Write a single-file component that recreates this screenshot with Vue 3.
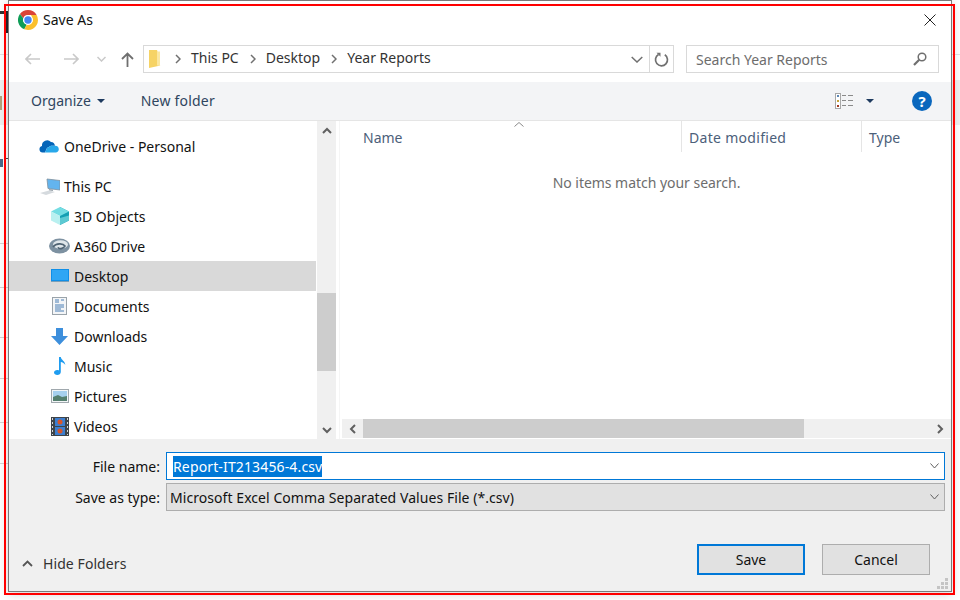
<script setup>
const places = [
  { name: 'This PC', icon: 'pc', level: 1, top: true },
  { name: '3D Objects', icon: 'cube', level: 2 },
  { name: 'A360 Drive', icon: 'a360', level: 2 },
  { name: 'Desktop', icon: 'desktop', level: 2, selected: true },
  { name: 'Documents', icon: 'docs', level: 2 },
  { name: 'Downloads', icon: 'down', level: 2 },
  { name: 'Music', icon: 'music', level: 2 },
  { name: 'Pictures', icon: 'pics', level: 2 },
  { name: 'Videos', icon: 'video', level: 2 },
]
const behindLines = [243, 287, 337, 378, 422, 463]
</script>

<template>
  <div class="page">
    <div class="behind">
      <div class="band"></div>
      <div class="line wide"></div>
      <div v-for="y in behindLines" :key="y" class="line" :style="{ top: y + 'px' }"></div>
      <div class="frag frag-n"></div>
      <div class="frag frag-n2"></div>
      <div class="frag frag-ly"></div>
      <div class="frag frag-or"></div>
      <div class="frag frag-tick"></div>
    </div>
    <div class="dialog">
      <header class="title">
        <svg class="chrome" width="20" height="20" viewBox="0 0 20 20">
          <path d="M10 0a10 10 0 0 1 8.66 5H10a5 5 0 0 0-4.700 3.300L1.900 4.100A10 10 0 0 1 10 0z" fill="#db4437" />
          <path d="M1.900 4.100l3.400 4.200A5 5 0 0 0 8.700 14.800L6.300 19.300A10 10 0 0 1 1.900 4.100z" fill="#0f9d58" />
          <path d="M18.660 5A10 10 0 0 1 10 20L6.300 19.300l2.400-4.500A5 5 0 0 0 14.300 7.500L13 5z" fill="#fbc02d" />
          <circle cx="10" cy="10" r="4.700" fill="#fff" />
          <circle cx="10" cy="10" r="3.700" fill="#4285f4" />
        </svg>
        <span class="title-text">Save As</span>
        <svg class="close" width="12" height="12" viewBox="0 0 12 12">
          <path d="M.5.5l11 11M11.500.5l-11 11" stroke="#222" fill="none" />
        </svg>
      </header>

      <nav class="nav">
        <div class="arrows">
          <svg width="15" height="12" viewBox="0 0 15 12"><path d="M15 6H1M6 1L1 6l5 5" stroke="#c9c9c9" stroke-width="1.6" fill="none" /></svg>
          <svg width="15" height="12" viewBox="0 0 15 12"><path d="M0 6h14M9 1l5 5-5 5" stroke="#c9c9c9" stroke-width="1.6" fill="none" /></svg>
          <svg width="9" height="6" viewBox="0 0 9 6"><path d="M.5 1l4 4 4-4" stroke="#c9c9c9" stroke-width="1.5" fill="none" /></svg>
          <svg width="13" height="15" viewBox="0 0 13 15"><path d="M6.500 15V1.500M1 7l5.500-5.500L12 7" stroke="#6f6f6f" stroke-width="1.8" fill="none" /></svg>
        </div>
        <div class="address">
          <svg class="folder" width="12" height="18" viewBox="0 0 12 18">
            <path d="M0 0h8l.5 1.500V15l3 .5L0 18z" fill="#f6d365" />
            <path d="M8 1.500h3V15.500H8z" fill="#fbe7a1" />
          </svg>
          <svg class="crumb" width="6" height="10" viewBox="0 0 6 10"><path d="M1 1l4 4-4 4" stroke="#707070" stroke-width="1.5" fill="none" /></svg>
          <span class="crumb-text">This PC</span>
          <svg class="crumb" width="6" height="10" viewBox="0 0 6 10"><path d="M1 1l4 4-4 4" stroke="#707070" stroke-width="1.5" fill="none" /></svg>
          <span class="crumb-text">Desktop</span>
          <svg class="crumb" width="6" height="10" viewBox="0 0 6 10"><path d="M1 1l4 4-4 4" stroke="#707070" stroke-width="1.5" fill="none" /></svg>
          <span class="crumb-text">Year Reports</span>
          <svg class="addr-caret" width="12" height="7" viewBox="0 0 12 7"><path d="M.7 1l5.300 5 5.300-5" stroke="#707070" stroke-width="1.500" fill="none" /></svg>
          <div class="refresh">
            <svg width="15" height="15" viewBox="0 0 15 15">
              <path d="M4.500 2.600A6 6 0 1 0 10.800 2.800" stroke="#707070" stroke-width="1.700" fill="none" />
              <path d="M2.500 .8h4v4z" fill="#707070" />
            </svg>
          </div>
        </div>
        <div class="search">
          <span>Search Year Reports</span>
          <svg width="14" height="14" viewBox="0 0 14 14">
            <circle cx="9" cy="5" r="3.800" stroke="#6f6f6f" stroke-width="1.500" fill="none" />
            <path d="M6.200 7.800L1 13" stroke="#6f6f6f" stroke-width="2.200" />
          </svg>
        </div>
      </nav>

      <div class="toolbar">
        <span class="tool">Organize</span>
        <svg class="tri" width="8" height="4" viewBox="0 0 8 4"><path d="M0 0h8L4 4z" fill="#1e3a5f" /></svg>
        <span class="tool new">New folder</span>
        <svg class="views" width="18" height="16" viewBox="0 0 18 16">
          <rect x=".5" y=".5" width="5" height="15" fill="#fff" stroke="#a8a8a8" />
          <rect x="2" y="2" width="2" height="2" fill="#5b87b5" />
          <rect x="2" y="7" width="2" height="2" fill="#c6a23a" />
          <rect x="2" y="12" width="2" height="2" fill="#a33b22" />
          <path d="M7 2.500h4M13 2.500h5M7 7.500h4M13 7.500h5M7 12.500h4M13 12.500h5" stroke="#8a8a8a" />
        </svg>
        <svg class="tri view-tri" width="8" height="4" viewBox="0 0 8 4"><path d="M0 0h8L4 4z" fill="#1e3a5f" /></svg>
        <span class="help">?</span>
      </div>

      <main class="main">
        <aside class="tree">
          <div class="row lvl1 onedrive">
            <span class="slot">
              <svg width="20" height="14" viewBox="0 0 20 14">
                <path d="M3.500 13.500a3.300 3.300 0 0 1-.5-6.500A5.200 5.200 0 0 1 12 3a4.500 4.500 0 0 1 4 3.700h-4L8 9l-2 4.500z" fill="#0364b8" />
                <path d="M6 13.500L8 9l4-2.300h4a3.500 3.500 0 0 1 3.800 3.500c0 1.800-1.300 3.300-3.200 3.300z" fill="#28a8ea" />
              </svg>
            </span>
            <span class="label">OneDrive - Personal</span>
          </div>
          <div v-for="p in places" :key="p.name" class="row" :class="[p.level === 1 ? 'lvl1' : 'lvl2', { selected: p.selected, gap: p.top }]">
            <span class="slot">
              <svg v-if="p.icon === 'pc'" width="21" height="18" viewBox="0 0 21 18">
                <path d="M8 2l13 1.500V13L9 11.500z" fill="#63b4ee" stroke="#7f8f9c" stroke-width=".8" />
                <path d="M10 12l4 .5v1.500l-4-.5z" fill="#9aa4ac" />
                <path d="M1 16l9-2.500 6 1.500-9 3z" fill="#d5dade" />
              </svg>
              <svg v-else-if="p.icon === 'cube'" width="18" height="18" viewBox="0 0 18 18">
                <path d="M9 0l9 4.500v9L9 18z" fill="#149fb3" />
                <path d="M9 11l9-2.500v5L9 18z" fill="#5cc9d2" />
                <path d="M9 0L0 4.500 9 9l9-4.500z" fill="#74dde3" />
                <path d="M0 4.500v9L9 18V9z" fill="#b9f0f0" />
              </svg>
              <svg v-else-if="p.icon === 'a360'" width="21" height="16" viewBox="0 0 21 16">
                <ellipse cx="10.500" cy="8" rx="10.500" ry="7.500" fill="#7d91a1" />
                <ellipse cx="11.500" cy="6.500" rx="7.500" ry="4.200" fill="#dfe6ea" />
                <path d="M4 9c3-4 10-4 12-1-2 3-6 3.500-7 1.200" stroke="#4f6373" stroke-width="1.600" fill="none" />
              </svg>
              <svg v-else-if="p.icon === 'desktop'" width="18" height="14" viewBox="0 0 18 14">
                <rect width="18" height="12" fill="#0f8fe8" />
                <rect x="1" y="1" width="16" height="10" fill="#2fa6f4" />
                <rect y="12" width="18" height="1" fill="#7a9fb8" />
              </svg>
              <svg v-else-if="p.icon === 'docs'" width="15" height="18" viewBox="0 0 15 18">
                <rect x=".5" y=".5" width="14" height="17" fill="#f3f5f7" stroke="#9aa3aa" />
                <path d="M3 3h4M3 5h4M9 3h3M3 8h9M3 10h9M3 12h6M3 14h9" stroke="#4a7fb5" />
              </svg>
              <svg v-else-if="p.icon === 'down'" width="17" height="17" viewBox="0 0 17 17">
                <path d="M5 0h7v8h5l-8.500 9L0 8h5z" fill="#3d8fdc" />
              </svg>
              <svg v-else-if="p.icon === 'music'" width="12" height="18" viewBox="0 0 12 18">
                <path d="M5 0h1.800c.3 3 4.500 4 4.500 8-1-1.800-2.800-2.700-4.500-3v10c0 1.800-1.700 3-3.500 3S0 17 0 15.500 1.500 13 3.200 13c.7 0 1.300.1 1.800.4z" fill="#1e9cf0" />
              </svg>
              <svg v-else-if="p.icon === 'pics'" width="18" height="14" viewBox="0 0 18 14">
                <rect x=".5" y=".5" width="17" height="13" fill="#f2f5f7" stroke="#a0a8ad" />
                <rect x="2" y="2" width="14" height="6" fill="#a6d0ee" />
                <path d="M2 8l5-2 4 2 5-1v5H2z" fill="#55806f" />
              </svg>
              <svg v-else-if="p.icon === 'video'" width="18" height="19" viewBox="0 0 18 19">
                <rect width="18" height="19" fill="#3e4449" />
                <rect x="4" y="1" width="10" height="8" fill="#3c7fd0" />
                <rect x="4" y="10" width="10" height="8" fill="#3c7fd0" />
                <circle cx="9" cy="5" r="2.500" fill="#d8562b" />
                <circle cx="9" cy="14" r="2.500" fill="#d8562b" />
                <path d="M1.500 1v17M16.500 1v17" stroke="#d5d8da" stroke-dasharray="2 2" />
              </svg>
            </span>
            <span class="label">{{ p.name }}</span>
          </div>
        </aside>

        <div class="vscroll">
          <div class="sbtn">
            <svg width="10" height="7" viewBox="0 0 10 7"><path d="M1 6l4-4 4 4" stroke="#606060" stroke-width="2" fill="none" /></svg>
          </div>
          <div class="vthumb"></div>
          <div class="sbtn end">
            <svg width="10" height="7" viewBox="0 0 10 7"><path d="M1 1l4 4 4-4" stroke="#606060" stroke-width="2" fill="none" /></svg>
          </div>
        </div>

        <section class="list">
          <div class="heads">
            <span class="col col-name">Name
              <svg class="sort" width="10" height="5" viewBox="0 0 10 5"><path d="M.5 4.500L5 .5l4.500 4" stroke="#8a8a8a" fill="none" /></svg>
            </span>
            <span class="col col-date">Date modified</span>
            <span class="col col-type">Type</span>
          </div>
          <p class="empty">No items match your search.</p>
          <div class="hscroll">
            <div class="hbtn">
              <svg width="7" height="10" viewBox="0 0 7 10"><path d="M6 1L2 5l4 4" stroke="#606060" stroke-width="2" fill="none" /></svg>
            </div>
            <div class="hthumb"></div>
            <div class="hbtn right">
              <svg width="7" height="10" viewBox="0 0 7 10"><path d="M1 1l4 4-4 4" stroke="#606060" stroke-width="2" fill="none" /></svg>
            </div>
          </div>
        </section>
      </main>

      <footer class="bottom">
        <div class="fields">
          <label>File name:</label>
          <div class="input">
            <span class="sel">Report-IT213456-4.csv</span>
            <svg width="9" height="6" viewBox="0 0 9 6"><path d="M.5.500l4 4.500 4-4.500" stroke="#606060" fill="none" /></svg>
          </div>
          <label>Save as type:</label>
          <div class="select">
            <span class="type-text">Microsoft Excel Comma Separated Values File (*.csv)</span>
            <svg width="9" height="6" viewBox="0 0 9 6"><path d="M.5.500l4 4.500 4-4.500" stroke="#606060" fill="none" /></svg>
          </div>
        </div>
        <div class="actions">
          <div class="hide">
            <svg width="11" height="7" viewBox="0 0 11 7"><path d="M1 6l4.500-4.500L10 6" stroke="#555" stroke-width="1.800" fill="none" /></svg>
            <span>Hide Folders</span>
          </div>
          <button class="btn primary">Save</button>
          <button class="btn">Cancel</button>
        </div>
        <svg class="grip" width="11" height="11" viewBox="0 0 11 11">
          <path d="M8 0h3v3H8zM4 4h3v3H4zM8 4h3v3H8zM0 8h3v3H0zM4 8h3v3H4zM8 8h3v3H8z" fill="#c4c4c4" />
        </svg>
      </footer>
    </div>
    <div class="red-frame"></div>
  </div>
</template>

<style>
html, body { margin: 0; background: #fff; }
</style>

<style scoped>
.page {
  position: relative;
  width: 960px;
  height: 600px;
  overflow: hidden;
  background: #fff;
  font-family: "Noto Sans", "Open Sans", sans-serif;
  font-size: 14px;
  color: #1a1a1a;
}
.behind {
  position: absolute;
  inset: 0;
  overflow: hidden;
}
.band {
  position: absolute;
  left: 0;
  right: 0;
  top: 80px;
  height: 45px;
  background: #f0f0f0;
}
.line {
  position: absolute;
  left: 0;
  width: 8px;
  height: 1px;
  background: #d4d4d4;
}
.wide {
  top: 54px;
  width: 100%;
  background: #e2e2e2;
}
.frag { position: absolute; }
.frag-n {
  left: 0;
  top: 11px;
  width: 4px;
  height: 3px;
  background: #333;
}
.frag-n2 {
  left: 5px;
  top: 11px;
  width: 3px;
  height: 22px;
  background: #22262b;
}
.frag-ly {
  left: 0;
  top: 96px;
  width: 2px;
  height: 14px;
  background: #b4a27a;
}
.frag-or {
  left: 0;
  top: 159px;
  width: 3px;
  height: 8px;
  background: #4a6a8a;
}
.frag-tick {
  left: 6px;
  top: 158px;
  width: 2px;
  height: 1px;
  background: #444;
}
.red-frame {
  position: absolute;
  left: 4px;
  top: 4px;
  width: 947px;
  height: 587px;
  border: 2px solid #f00;
  pointer-events: none;
}
.dialog {
  position: relative;
  box-sizing: border-box;
  width: 944px;
  height: 592px;
  margin-left: 8px;
  border: 1px solid #7a7a7a;
  display: flex;
  flex-direction: column;
  background: #fff;
  box-shadow: 0 2px 10px rgba(0, 0, 0, .18);
}
.title {
  height: 44px;
  flex: none;
  display: flex;
  align-items: center;
  padding: 0 15px 6px 9px;
  box-sizing: border-box;
}
.title-text { margin: 0 0 2px 5px; color: #111; }
.close { margin-left: auto; }
.nav {
  height: 28px;
  flex: none;
  display: flex;
  align-items: center;
  margin-bottom: 9px;
}
.arrows {
  width: 134px;
  flex: none;
  box-sizing: border-box;
  padding-left: 16px;
  display: flex;
  align-items: center;
}
.arrows svg:nth-child(2) { margin-left: 24px; }
.arrows svg:nth-child(3) { margin-left: 18px; }
.arrows svg:nth-child(4) { margin-left: 15px; }
.address {
  width: 531px;
  height: 28px;
  box-sizing: border-box;
  border: 1px solid #d9d9d9;
  display: flex;
  align-items: center;
  padding-left: 5px;
}
.folder { flex: none; margin-right: 14px; }
.crumb { flex: none; }
.crumb-text { margin: 0 11px 3px 10px; color: #333; }
.addr-caret { margin-left: auto; margin-right: 6px; }
.refresh {
  width: 23px;
  height: 26px;
  border-left: 1px solid #d9d9d9;
  display: flex;
  align-items: center;
  justify-content: center;
}
.search {
  width: 253px;
  height: 28px;
  margin-left: 12px;
  box-sizing: border-box;
  border: 1px solid #d9d9d9;
  display: flex;
  align-items: center;
  justify-content: space-between;
  padding: 0 11px 0 9px;
  color: #6d6d6d;
}
.toolbar {
  height: 39px;
  flex: none;
  box-sizing: border-box;
  background: #f3f4f6;
  border-bottom: 1px solid #e5e5e5;
  display: flex;
  align-items: center;
  padding-left: 22px;
  color: #2f4560;
}
.tool { margin-bottom: 1px; }
.tri { margin-left: 6px; flex: none; }
.new { margin-left: 36px; letter-spacing: .2px; }
.views { margin-left: auto; transform: translateX(1px); }
.view-tri { margin-left: 14px; }
.help {
  width: 20px;
  height: 20px;
  margin: 0 19px 0 38px;
  border-radius: 50%;
  background: #0a67bd;
  color: #fff;
  font-weight: 700;
  font-size: 15px;
  line-height: 20px;
  text-align: center;
}
.main {
  height: 318px;
  flex: none;
  display: flex;
}
.tree {
  width: 307px;
  flex: none;
  box-sizing: border-box;
  padding-top: 10px;
  margin-right: 1px;
  overflow: hidden;
}
.row {
  height: 30px;
  display: flex;
  align-items: center;
  color: #111;
}
.slot {
  width: 21px;
  flex: none;
  display: flex;
  align-items: center;
  justify-content: center;
}
.onedrive .slot { justify-content: flex-start; }
.label { margin-left: 4px; }
.gap { margin-top: 10px; }
.lvl1 { padding-left: 30px; }
.lvl2 { padding-left: 40px; }
.selected { background: #d9d9d9; }
.vscroll {
  width: 19px;
  flex: none;
  background: #f0f0f0;
  display: flex;
  flex-direction: column;
  align-items: center;
}
.sbtn {
  height: 18px;
  width: 100%;
  display: flex;
  align-items: center;
  justify-content: center;
}
.vthumb {
  width: 100%;
  height: 78px;
  margin-top: 154px;
  background: #cdcdcd;
}
.end { margin-top: auto; }
.list {
  flex: 1;
  display: flex;
  flex-direction: column;
  margin-left: 3px;
  border-left: 1px solid #f5f5f5;
  min-width: 0;
}
.heads {
  height: 31px;
  flex: none;
  display: flex;
  color: #4c607a;
}
.col {
  position: relative;
  box-sizing: border-box;
  display: flex;
  align-items: center;
  padding-top: 2px;
}
.col-name { width: 342px; padding-left: 23px; border-right: 1px solid #e5e5e5; }
.col-date { width: 180px; padding-left: 7px; border-right: 1px solid #e5e5e5; letter-spacing: .3px; }
.col-type { padding-left: 7px; }
.sort { position: absolute; left: 174px; top: 1px; }
.empty {
  margin: 21px 0 0;
  flex: 1;
  padding-left: 2px;
  text-align: center;
  color: #6d6d6d;
  letter-spacing: -.03px;
}
.hscroll {
  height: 19px;
  flex: none;
  margin: 0 0 1px 2px;
  background: #f0f0f0;
  display: flex;
  align-items: center;
}
.hbtn {
  width: 21px;
  flex: none;
  display: flex;
  justify-content: center;
}
.hthumb {
  width: 441px;
  height: 100%;
  background: #cdcdcd;
}
.right { margin-left: auto; }
.bottom {
  position: relative;
  flex: 1;
  background: #f0f0f0;
  box-sizing: border-box;
  padding-top: 13px;
}
.fields {
  display: grid;
  grid-template-columns: 151px 779px;
  grid-auto-rows: 28px;
  column-gap: 6px;
  row-gap: 3px;
  align-items: center;
}
.fields label { text-align: right; color: #111; }
.input, .select {
  box-sizing: border-box;
  height: 28px;
  display: flex;
  align-items: center;
  justify-content: space-between;
  padding: 0 5px 0 4px;
  border: 1px solid #0078d7;
  background: #fff;
}
.select {
  border-color: #adadad;
  background: #e1e1e1;
  color: #111;
  padding-left: 3px;
}
.type-text { letter-spacing: .06px; }
.sel {
  margin-left: 2px;
  background: #0078d7;
  color: #fff;
  line-height: 21px;
  letter-spacing: .14px;
}
.actions {
  display: flex;
  align-items: center;
  margin-top: 33px;
  padding-right: 21px;
}
.hide {
  display: flex;
  align-items: center;
  margin: 8px auto 0 13px;
  gap: 9px;
  color: #333;
}
.hide span { letter-spacing: .08px; margin-left: 1px; }
.btn {
  width: 108px;
  height: 31px;
  box-sizing: border-box;
  margin-left: 17px;
  padding: 0;
  border: 1px solid #adadad;
  background: #e1e1e1;
  font: inherit;
  color: #111;
}
.primary { border: 2px solid #0078d7; }
.grip { position: absolute; right: 3px; bottom: 2px; }
</style>
